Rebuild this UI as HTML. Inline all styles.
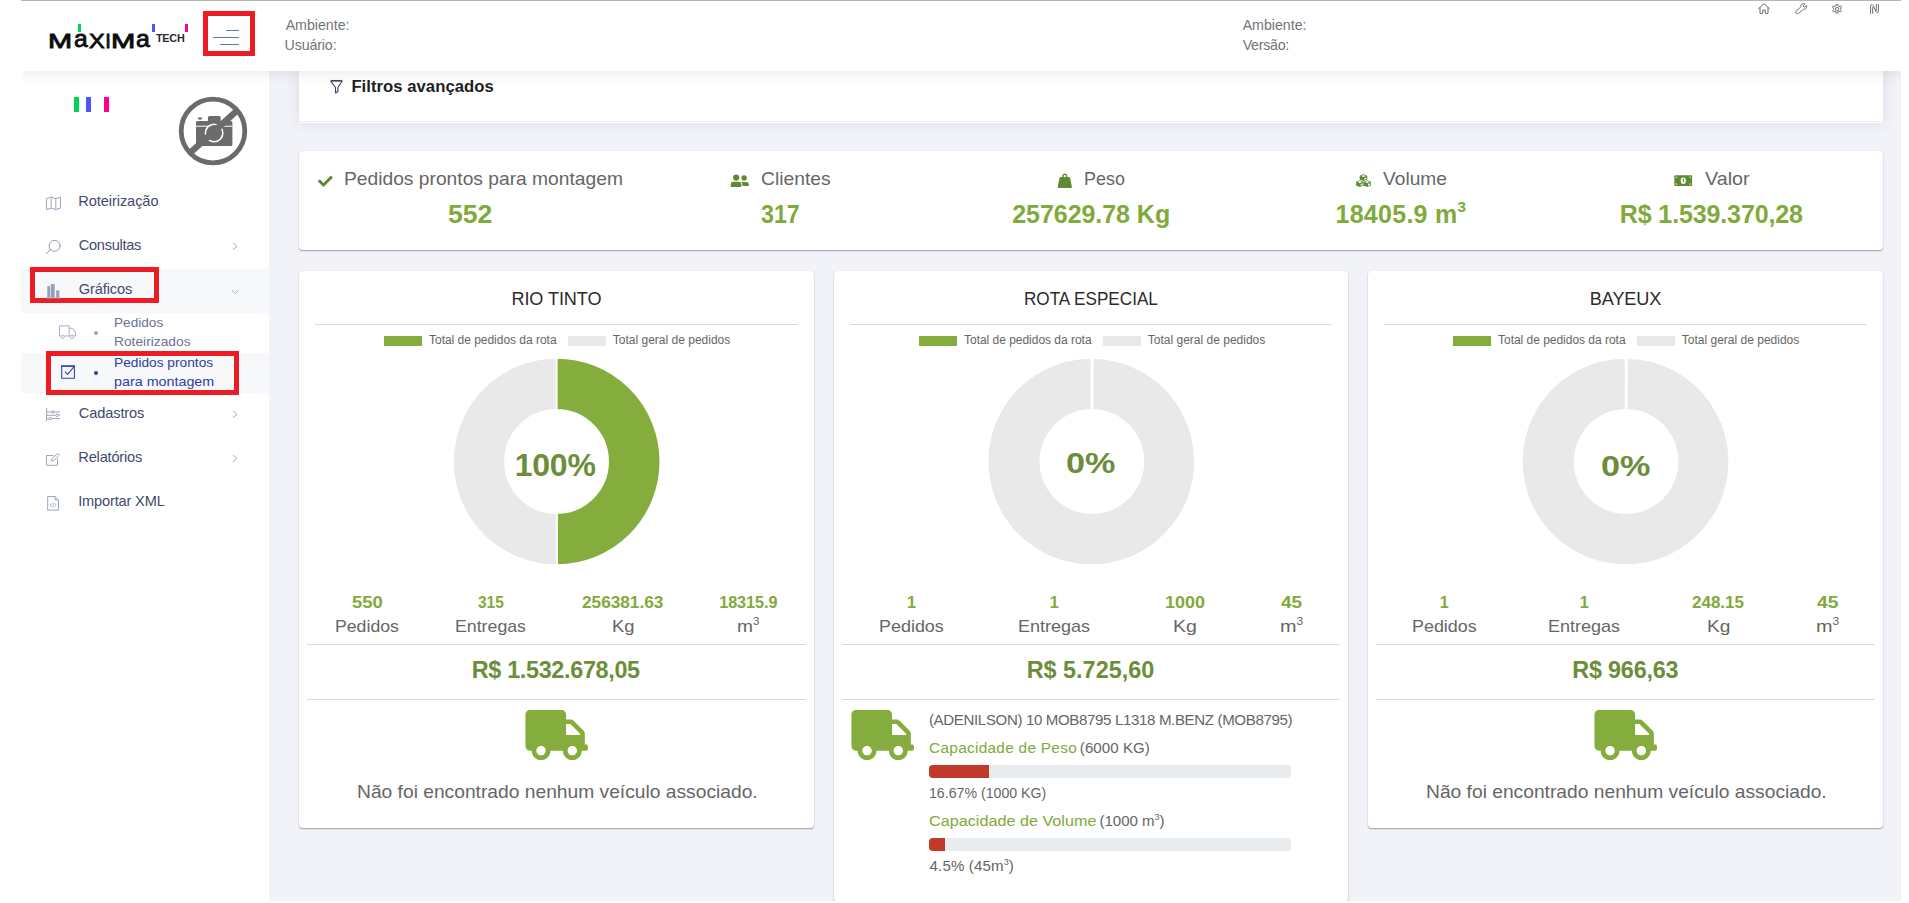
<!DOCTYPE html>
<html lang="pt-BR">
<head>
<meta charset="utf-8">
<title>Pedidos prontos para montagem</title>
<style>
html,body{margin:0;padding:0}
body{width:1909px;height:903px;position:relative;overflow:hidden;background:#fff;font-family:"Liberation Sans",sans-serif}
.t{position:absolute;white-space:pre;line-height:1;font-family:"Liberation Sans",sans-serif}
.abs{position:absolute}
#main{left:269px;top:1px;width:1632px;height:901px;background:#f2f3f8}
#sidebar{left:21px;top:71px;width:248px;height:831px;background:#fff}
#header{left:21px;top:0;width:1880px;height:71px;background:#fff;box-shadow:0 1px 13px rgba(60,60,80,.13)}
#topline{left:21px;top:0;width:1880px;height:1px;background:#b4b4b4}
.card{background:#fff;border-radius:4px;box-shadow:0 1px 1.5px rgba(0,0,0,.36)}
.hr{height:1px;background:#dcdcdc}
.redbox{border:5px solid #ed1c24;box-sizing:border-box}
.rowbg{background:#f7f8fa}
.bar{height:12px;border-radius:4px;background:#e9ecef;overflow:hidden}
.bar i{display:block;height:100%;background:#c0392b}
svg{position:absolute;overflow:visible}

sup{font-size:61%;line-height:0;position:relative;vertical-align:baseline;top:-0.70em;letter-spacing:0}

</style>
</head>
<body>
<div id="main" class="abs"></div>
<div id="filter" class="abs" style="left:299px;top:40px;width:1584px;height:83px;background:#fff;box-shadow:0 0 13px rgba(69,65,78,.13)"><div class="abs" style="left:0;top:81px;width:1584px;height:1px;background:#ebedf2"></div></div>
<div id="sidebar" class="abs"></div>
<div class="abs rowbg" style="left:21px;top:269px;width:248px;height:44px"></div>
<div class="abs rowbg" style="left:21px;top:353px;width:248px;height:40px"></div>
<div id="header" class="abs"></div>
<div id="topline" class="abs"></div>
<div class="abs redbox" style="left:203px;top:11px;width:52px;height:45px"></div>
<div class="abs redbox" style="left:30px;top:266.8px;width:129px;height:36.6px"></div>
<div class="abs redbox" style="left:46px;top:351.2px;width:192.8px;height:43.6px"></div>
<div class="abs card" style="left:299px;top:151px;width:1584px;height:99px"></div>
<div class="abs card" style="left:299px;top:271px;width:515px;height:557px"></div>
<div class="abs card" style="left:834px;top:271px;width:514px;height:630.5px"></div>
<div class="abs card" style="left:1368px;top:271px;width:515px;height:557px"></div>
<div class="abs hr" style="left:315px;top:324px;width:483px"></div>
<div class="abs hr" style="left:307px;top:644px;width:499px"></div>
<div class="abs hr" style="left:307px;top:699px;width:499px"></div>
<div class="abs hr" style="left:850px;top:324px;width:482px"></div>
<div class="abs hr" style="left:842px;top:644px;width:498px"></div>
<div class="abs hr" style="left:842px;top:699px;width:498px"></div>
<div class="abs hr" style="left:1384px;top:324px;width:483px"></div>
<div class="abs hr" style="left:1376px;top:644px;width:499px"></div>
<div class="abs hr" style="left:1376px;top:699px;width:499px"></div>
<div class="abs" style="left:383.8px;top:336px;width:38px;height:10px;background:#85ad3d"></div>
<div class="abs" style="left:567.8px;top:336px;width:38px;height:10px;background:#e9e9e9"></div>
<div class="abs" style="left:918.8px;top:336px;width:38px;height:10px;background:#85ad3d"></div>
<div class="abs" style="left:1102.8px;top:336px;width:38px;height:10px;background:#e9e9e9"></div>
<div class="abs" style="left:1452.8px;top:336px;width:38px;height:10px;background:#85ad3d"></div>
<div class="abs" style="left:1636.8px;top:336px;width:38px;height:10px;background:#e9e9e9"></div>
<svg class="abs" style="left:0;top:0" width="1909" height="903" viewBox="0 0 1909 903"><path d="M556.40 357.70A103.8 103.8 0 0 1 556.99 565.30L556.69 512.90A51.4 51.4 0 0 0 556.40 410.10Z" fill="#85ad3d" stroke="#fff" stroke-width="2" stroke-linejoin="round"/><path d="M556.99 565.30A103.8 103.8 0 1 1 556.40 357.70L556.40 410.10A51.4 51.4 0 1 0 556.69 512.90Z" fill="#e9e9e9" stroke="#fff" stroke-width="2" stroke-linejoin="round"/></svg>
<svg class="abs" style="left:0;top:0" width="1909" height="903" viewBox="0 0 1909 903"><path d="M1091.60 357.70A103.8 103.8 0 0 1 1092.78 357.71L1092.18 410.10A51.4 51.4 0 0 0 1091.60 410.10Z" fill="#85ad3d" stroke="#fff" stroke-width="2" stroke-linejoin="round"/><path d="M1092.78 357.71A103.8 103.8 0 1 1 1091.60 357.70L1091.60 410.10A51.4 51.4 0 1 0 1092.18 410.10Z" fill="#e9e9e9" stroke="#fff" stroke-width="2" stroke-linejoin="round"/></svg>
<svg class="abs" style="left:0;top:0" width="1909" height="903" viewBox="0 0 1909 903"><path d="M1625.80 357.70A103.8 103.8 0 0 1 1626.98 357.71L1626.38 410.10A51.4 51.4 0 0 0 1625.80 410.10Z" fill="#85ad3d" stroke="#fff" stroke-width="2" stroke-linejoin="round"/><path d="M1626.98 357.71A103.8 103.8 0 1 1 1625.80 357.70L1625.80 410.10A51.4 51.4 0 1 0 1626.38 410.10Z" fill="#e9e9e9" stroke="#fff" stroke-width="2" stroke-linejoin="round"/></svg>
<div class="abs bar" style="left:929.2px;top:765px;width:361.8px;height:12.6px"><i style="width:16.67%"></i></div>
<div class="abs bar" style="left:929.2px;top:838.4px;width:361.8px;height:12.4px"><i style="width:4.5%"></i></div>
<svg class="abs" style="left:524.6px;top:710.3px" width="63.4" height="50" viewBox="0 0 640 512"><path fill="#85ad3d" d="M624 352h-16V243.9c0-12.700-5.100-24.900-14.100-33.900L494 110.100c-9-9-21.200-14.100-33.900-14.100H416V48c0-26.500-21.500-48-48-48H48C21.500 0 0 21.500 0 48v320c0 26.500 21.500 48 48 48h16c0 53 43 96 96 96s96-43 96-96h128c0 53 43 96 96 96s96-43 96-96h48c8.800 0 16-7.200 16-16v-32c0-8.800-7.200-16-16-16zM160 464c-26.500 0-48-21.500-48-48s21.500-48 48-48 48 21.500 48 48-21.500 48-48 48zm320 0c-26.500 0-48-21.500-48-48s21.500-48 48-48 48 21.500 48 48-21.500 48-48 48zm80-208H416V144h44.100l99.900 99.900V256z"/></svg>
<svg class="abs" style="left:850.8px;top:710.3px" width="63.4" height="50" viewBox="0 0 640 512"><path fill="#85ad3d" d="M624 352h-16V243.9c0-12.700-5.100-24.900-14.100-33.900L494 110.100c-9-9-21.200-14.100-33.900-14.100H416V48c0-26.500-21.500-48-48-48H48C21.500 0 0 21.500 0 48v320c0 26.500 21.500 48 48 48h16c0 53 43 96 96 96s96-43 96-96h128c0 53 43 96 96 96s96-43 96-96h48c8.800 0 16-7.200 16-16v-32c0-8.800-7.200-16-16-16zM160 464c-26.500 0-48-21.500-48-48s21.500-48 48-48 48 21.500 48 48-21.500 48-48 48zm320 0c-26.500 0-48-21.500-48-48s21.500-48 48-48 48 21.500 48 48-21.500 48-48 48zm80-208H416V144h44.100l99.900 99.900V256z"/></svg>
<svg class="abs" style="left:1594.1px;top:710.3px" width="63.4" height="50" viewBox="0 0 640 512"><path fill="#85ad3d" d="M624 352h-16V243.9c0-12.700-5.100-24.900-14.100-33.900L494 110.100c-9-9-21.200-14.100-33.900-14.100H416V48c0-26.500-21.500-48-48-48H48C21.500 0 0 21.500 0 48v320c0 26.500 21.500 48 48 48h16c0 53 43 96 96 96s96-43 96-96h128c0 53 43 96 96 96s96-43 96-96h48c8.800 0 16-7.200 16-16v-32c0-8.800-7.200-16-16-16zM160 464c-26.500 0-48-21.500-48-48s21.500-48 48-48 48 21.500 48 48-21.500 48-48 48zm320 0c-26.500 0-48-21.500-48-48s21.500-48 48-48 48 21.500 48 48-21.500 48-48 48zm80-208H416V144h44.100l99.900 99.900V256z"/></svg><!-- logo -->
<div class="abs" style="left:78px;top:24px;width:3px;height:8px;background:#00d455"></div>
<div class="abs" style="left:151.6px;top:23.7px;width:3px;height:8.8px;background:#4d55ff"></div>
<div class="abs" style="left:185px;top:23.7px;width:3px;height:8.3px;background:#ff0090"></div>
<!-- hamburger -->
<div class="abs" style="left:226.4px;top:30px;width:12.8px;height:1px;background:#5d78a0"></div>
<div class="abs" style="left:213px;top:37px;width:26.2px;height:1px;background:#5d78a0"></div>
<div class="abs" style="left:220px;top:44px;width:19.2px;height:1px;background:#5d78a0"></div>
<!-- header right icons -->
<svg style="left:1757.5px;top:2.8px" width="12" height="11" viewBox="0 0 12 11" fill="none" stroke="#6f6f6f" stroke-width="1" stroke-linejoin="round" stroke-linecap="round"><path d="M0.6 5.6L6 0.7l5.400 4.900M2 4.600V10.400h2.800V7h2.400v3.400H10V4.600"/></svg>
<svg style="left:1794.5px;top:3.2px" width="12" height="11" viewBox="0 0 12 11" fill="none" stroke="#6f6f6f" stroke-width="1" stroke-linejoin="round" stroke-linecap="round"><path d="M1 10.300c-.6-.6-.6-1.300 0-1.900l4.900-4.600C5.600 2.400 6.300 1.200 7.600.7c.8-.3 1.700-.2 2.300.1L8.300 2.500l.3 1.300 1.300.3 1.600-1.600c.3.700.3 1.500 0 2.200-.6 1.200-1.800 1.800-3.100 1.600L3.600 10.300c-.6.600-1.300.6-1.900 0z"/></svg>
<svg style="left:1831.3px;top:4.1px" width="12" height="11" viewBox="0 0 12 11" fill="none" stroke="#6f6f6f" stroke-width="1" stroke-linejoin="round"><path d="M5.100.6h1.800l.3 1.400 1 .5 1.300-.7.900 1.300-.9 1.100v1.300l.9 1.100-.9 1.300-1.300-.7-1 .5-.3 1.400H5.100l-.3-1.400-1-.5-1.300.7-.9-1.300.9-1.100V4.200l-.9-1.100.9-1.300 1.300.7 1-.5z"/><circle cx="6" cy="5.200" r="1.700"/></svg>
<svg style="left:1870px;top:4.3px" width="9" height="10" viewBox="0 0 9 10" fill="none" stroke="#6f6f6f" stroke-width="1" stroke-linejoin="round" stroke-linecap="round"><path d="M.6 9.500V1.800C.6.300 2.400.1 3 1.300l3 6.400c.6 1.200 2.400 1 2.400-.5V.5M2.700 9.500V3.400M6.300.5v6"/></svg>
<!-- sidebar colour bars -->
<div class="abs" style="left:73.5px;top:96.5px;width:5.600px;height:15.400px;background:#00d455"></div>
<div class="abs" style="left:85.600px;top:96.500px;width:5.400px;height:15.400px;background:#4d55ff"></div>
<div class="abs" style="left:103.900px;top:96.500px;width:5.600px;height:15.400px;background:#ff0090"></div>
<!-- no-photo camera -->
<svg style="left:176px;top:94px" width="74" height="74" viewBox="176 94 74 74">
<circle cx="213" cy="131" r="31.800" fill="none" stroke="#6b6b6b" stroke-width="4.800"/>
<path fill="#6b6b6b" d="M196 122.500q0-1.500 1.500-1.500H208v-3.400q0-1.500 1.500-1.500h9.700q1.500 0 1.500 1.500V121h10.200q1.500 0 1.500 1.500v21.900q0 1.500-1.500 1.500H197.500q-1.500 0-1.500-1.500z"/>
<rect x="197.800" y="117.600" width="4.400" height="1.800" rx=".8" fill="#6b6b6b"/>
<rect x="196" y="125.700" width="36.400" height="1" fill="#fff"/>
<circle cx="214.100" cy="133" r="8.600" fill="none" stroke="#fff" stroke-width="1.800"/>
<circle cx="214.100" cy="133" r="7.700" fill="#6b6b6b"/>
<path d="M190.600 152.300L237.600 110.100" stroke="#6b6b6b" stroke-width="6.400" fill="none"/>
</svg>
<!-- sidebar icons -->
<svg style="left:45px;top:195px" width="17" height="16" viewBox="45 195 17 16" fill="none" stroke="#9da3c2" stroke-width="1" stroke-linejoin="round"><path d="M46.500 198.600l4.600-1.500 4.700 1.500 4.600-1.500v11l-4.600 1.500-4.700-1.500-4.600 1.500zM51.100 197.100v11M55.800 198.600v11"/></svg>
<svg style="left:45px;top:238px" width="17" height="17" viewBox="45 238 17 17" fill="none" stroke="#9297b8" stroke-width="1" stroke-linecap="round"><circle cx="54.600" cy="245.800" r="5.500"/><path d="M50.600 249.700L46.400 253.500"/></svg>
<svg style="left:45px;top:283px" width="17" height="16" viewBox="45 283 17 16"><rect x="47.300" y="286.300" width="2.800" height="11.200" fill="#9a9cb8"/><rect x="50.800" y="284.100" width="3.900" height="13.400" fill="#9a9cb8"/><rect x="56.200" y="290.300" width="3.100" height="7.200" fill="#9a9cb8"/><rect x="46" y="297.500" width="14.600" height="1" fill="#9a9cb8"/></svg>
<svg style="left:58px;top:324px" width="19" height="16" viewBox="58 324 19 16" fill="none" stroke="#a9aecb" stroke-width="1" stroke-linejoin="round"><path d="M59.500 325.800h9.700v10.200M59.500 325.800v10.200h1.400M64.400 336h5.800M69.200 328.300h3.400l2.800 3.700v4h-1.600"/><circle cx="62.600" cy="336.800" r="1.600"/><circle cx="71.900" cy="336.800" r="1.600"/></svg>

<svg style="left:60px;top:363px" width="17" height="17" viewBox="60 363 17 17" fill="none" stroke="#3545a8" stroke-width="1.100" stroke-linejoin="round" stroke-linecap="round"><path d="M61.700 366.200h12.700v12H61.700z"/><path d="M61.700 366h12.700" stroke-width="1.600"/><path d="M65.200 371.800l2.400 2.600 6-7.200"/></svg>
<svg style="left:45px;top:407px" width="17" height="16" viewBox="45 407 17 16" fill="none" stroke="#9da3c2" stroke-width="1"><path d="M46.600 408v13.500M46.600 412h13.400M46.600 415.300h13.400M46.600 418.600h13.400"/><circle cx="52.900" cy="412" r="1.300" fill="#fff"/><circle cx="57.200" cy="415.300" r="1.300" fill="#fff"/><circle cx="50.300" cy="418.600" r="1.300" fill="#fff"/></svg>
<svg style="left:45px;top:452px" width="17" height="16" viewBox="45 452 17 16" fill="none" stroke="#9da3c2" stroke-width="1" stroke-linejoin="round"><path d="M53.500 455.500h-7v9.800h11v-6.500"/><path d="M51.300 461l.7-2.300 5.800-5.300 1.700 1.700-5.900 5.300z"/></svg>
<svg style="left:46px;top:495px" width="15" height="17" viewBox="46 495 15 17" fill="none" stroke="#9da3c2" stroke-width="1" stroke-linejoin="round"><path d="M47.700 496.600h7.400l3.400 3.300v10.200H47.700zM55.100 496.600v3.300h3.400"/><path d="M51.400 503.300l-1.400 1.700 1.400 1.700M54.800 503.300l1.400 1.700-1.400 1.700M53.500 502.500l-.8 5" stroke-width=".8"/></svg>
<!-- bullets -->
<div class="abs" style="left:94.100px;top:331px;width:4px;height:4px;border-radius:50%;background:#a3a7c0"></div>
<div class="abs" style="left:93.900px;top:370.600px;width:4.400px;height:4.400px;border-radius:50%;background:#2e3e9b"></div>
<!-- chevrons -->
<svg style="left:232px;top:242px" width="7" height="9" viewBox="0 0 7 9" fill="none" stroke="#a6abc6" stroke-width="1"><path d="M1 1l4 3.400L1 7.800"/></svg>
<svg style="left:230px;top:288px" width="11" height="7" viewBox="0 0 11 7" fill="none" stroke="#a6abc6" stroke-width="1"><path d="M1.800 2.200l3.500 3.300 3.500-3.300"/></svg>
<svg style="left:232px;top:410px" width="7" height="9" viewBox="0 0 7 9" fill="none" stroke="#a6abc6" stroke-width="1"><path d="M1 1l4 3.400L1 7.800"/></svg>
<svg style="left:232px;top:454px" width="7" height="9" viewBox="0 0 7 9" fill="none" stroke="#a6abc6" stroke-width="1"><path d="M1 1l4 3.400L1 7.800"/></svg>
<!-- funnel -->
<svg style="left:329px;top:79px" width="16" height="16" viewBox="329 79 16 16" fill="none" stroke="#3f4254" stroke-linejoin="round"><path d="M330.600 80.800h11.800" stroke-width="1.700"/><path d="M330.900 81.300l4.600 6.200v5.400l2.400-1.400v-4l4.200-6.200" stroke-width="1.100"/></svg>
<!-- stat icons -->
<svg style="left:317.500px;top:173.600px" width="14.600" height="14.600" viewBox="0 0 512 512"><path fill="#5e8a2e" d="M173.898 439.404l-166.400-166.400c-9.997-9.997-9.997-26.206 0-36.204l36.203-36.204c9.997-9.998 26.207-9.998 36.204 0L192 312.690 432.095 72.596c9.997-9.997 26.207-9.997 36.204 0l36.203 36.204c9.997 9.997 9.997 26.206 0 36.204l-294.400 294.401c-9.998 9.997-26.207 9.997-36.204-.001z"/></svg>
<svg style="left:730px;top:174px" width="20" height="14" viewBox="730 174 20 14" fill="#5f8a33"><circle cx="736.200" cy="177.600" r="3.150"/><path d="M730.800 186.900v-2.600q0-2.500 2.500-2.500h5.500q2.500 0 2.500 2.500v2.600z"/><circle cx="744.100" cy="178" r="2.700"/><path d="M742.300 185.900v-1.700q0-1.300-.8-2.300h5q2.300 0 2.300 2.300v1.700z"/></svg>
<svg style="left:1057px;top:173px" width="16" height="16" viewBox="1057 173 16 16"><path fill="#5f8a33" fill-rule="evenodd" d="M1064.800 173.500a2.700 2.700 0 0 1 2.500 3.600h1.800q.7 0 .9.700l1.900 9q.2 1.100-.9 1.100h-12.400q-1.100 0-.9-1.100l1.900-9q.2-.7.900-.7h1.800a2.700 2.700 0 0 1 2.500-3.600zm0 1.500a1.150 1.150 0 1 0 0 2.300 1.150 1.150 0 0 0 0-2.300z"/></svg>
<svg style="left:1355px;top:173px" width="17" height="16" viewBox="1355 173 17 16">
<g fill="#5f8a33"><path d="M1363.500 174.300l3.800 1.500v3.700l-3.800 1.600-3.800-1.600v-3.700z"/><path d="M1359.800 180.200l3.700 1.500v3.800l-3.700 1.600-3.700-1.600v-3.800z"/><path d="M1367.200 180.200l3.700 1.500v3.800l-3.700 1.600-3.700-1.600v-3.800z"/></g>
<g fill="#fff"><path d="M1363.500 175.200l2.500.9-2.500 1-2.500-1z"/><path d="M1364.400 178.200l1.900-.8v1.700l-1.900.8z"/><path d="M1359.800 181.100l2.500.9-2.500 1-2.500-1z"/><path d="M1360.700 184.100l1.900-.8v1.700l-1.900.8z"/><path d="M1367.200 181.100l2.500.9-2.500 1-2.500-1z"/><path d="M1368.100 184.100l1.900-.8v1.700l-1.900.8z"/></g></svg>
<svg style="left:1674px;top:175px" width="19" height="11" viewBox="1674 175 19 11"><rect x="1674.300" y="175.300" width="17.800" height="10.600" rx=".9" fill="#5f8a33"/><ellipse cx="1683.300" cy="180.700" rx="2.600" ry="3.200" fill="#fff"/><path d="M1675.700 176.700h1.900l-1.900 1.600zM1690.700 176.700h-1.900l1.900 1.600zM1675.700 184.500h1.900l-1.900-1.600zM1690.700 184.500h-1.900l1.900-1.600z" fill="#fff"/><path d="M1682.700 179.400l.8-.5v3.400" stroke="#5f8a33" stroke-width=".9" fill="none"/></svg>
<div id="logo"><span class="t" style="left:48.03px;top:31.03px;font-size:20.13px;color:#0d0d10;-webkit-text-stroke:0.85px #0d0d10;transform-origin:0 0;transform:scaleX(1.439)">M</span><span class="t" style="left:73.76px;top:28.14px;font-size:23.55px;color:#0d0d10;-webkit-text-stroke:0.85px #0d0d10;transform-origin:0 0;transform:scaleX(1.048)">a</span><span class="t" style="left:88.78px;top:31.03px;font-size:20.13px;color:#0d0d10;-webkit-text-stroke:0.85px #0d0d10;transform-origin:0 0;transform:scaleX(1.169)">X</span><span class="t" style="left:105.15px;top:31.03px;font-size:20.13px;color:#0d0d10;-webkit-text-stroke:0.85px #0d0d10;transform-origin:0 0;transform:scaleX(1.000)">I</span><span class="t" style="left:111.22px;top:31.03px;font-size:20.13px;color:#0d0d10;-webkit-text-stroke:0.85px #0d0d10;transform-origin:0 0;transform:scaleX(1.447)">M</span><span class="t" style="left:135.75px;top:28.14px;font-size:23.55px;color:#0d0d10;-webkit-text-stroke:0.85px #0d0d10;transform-origin:0 0;transform:scaleX(1.056)">a</span></div>
<div class="abs" style="left:0;top:0;width:21px;height:903px;background:#fff"></div>
<div class="abs" style="left:1901px;top:0;width:8px;height:903px;background:#fff"></div>
<div class="abs" style="left:0;top:900.6px;width:1909px;height:3px;background:#fff"></div>

<div id="texts">
<span class="t " style="left:285.67px;top:17.98px;font-size:14.2px;color:#70757a;">Ambiente:</span>
<span class="t " style="left:284.60px;top:37.78px;font-size:14.2px;color:#70757a;letter-spacing:-0.122px;">Usuário:</span>
<span class="t " style="left:1242.67px;top:17.98px;font-size:14.2px;color:#70757a;">Ambiente:</span>
<span class="t " style="left:1242.64px;top:37.78px;font-size:14.2px;color:#70757a;letter-spacing:-0.244px;">Versão:</span>
<span class="t " style="left:78.30px;top:194.04px;font-size:14.6px;color:#434a6b;letter-spacing:-0.083px;">Roteirização</span>
<span class="t " style="left:78.76px;top:237.84px;font-size:14.6px;color:#434a6b;letter-spacing:-0.292px;">Consultas</span>
<span class="t " style="left:78.77px;top:281.64px;font-size:14.6px;color:#434a6b;letter-spacing:-0.126px;">Gráficos</span>
<span class="t " style="left:113.68px;top:315.90px;font-size:13.0px;color:#6c7293;transform-origin:0 0;transform:scaleX(1.0473);">Pedidos</span>
<span class="t " style="left:113.67px;top:334.80px;font-size:13.0px;color:#6c7293;transform-origin:0 0;transform:scaleX(1.0590);">Roteirizados</span>
<span class="t " style="left:113.67px;top:355.50px;font-size:13.0px;color:#2c3ea3;transform-origin:0 0;transform:scaleX(1.0550);">Pedidos prontos</span>
<span class="t " style="left:113.88px;top:374.80px;font-size:13.0px;color:#2c3ea3;transform-origin:0 0;transform:scaleX(1.1011);">para montagem</span>
<span class="t " style="left:78.76px;top:405.84px;font-size:14.6px;color:#434a6b;letter-spacing:-0.106px;">Cadastros</span>
<span class="t " style="left:78.30px;top:449.64px;font-size:14.6px;color:#434a6b;letter-spacing:-0.186px;">Relatórios</span>
<span class="t " style="left:78.15px;top:494.24px;font-size:14.6px;color:#434a6b;letter-spacing:-0.161px;">Importar XML</span>
<span class="t " style="left:351.38px;top:78.66px;font-size:16.7px;font-weight:700;color:#1e1e24;letter-spacing:0.031px;">Filtros avançados</span>
<span class="t " style="left:344.22px;top:170.65px;font-size:17.9px;color:#666666;transform-origin:0 0;transform:scaleX(1.0746);">Pedidos prontos para montagem</span>
<span class="t " style="left:448.18px;top:201.54px;font-size:25.0px;font-weight:700;color:#80aa3b;transform-origin:0 0;transform:scaleX(1.0639);">552</span>
<span class="t " style="left:761.02px;top:170.65px;font-size:17.9px;color:#666666;transform-origin:0 0;transform:scaleX(1.0763);">Clientes</span>
<span class="t " style="left:761.47px;top:201.54px;font-size:25.0px;font-weight:700;color:#80aa3b;transform-origin:0 0;transform:scaleX(0.9289);">317</span>
<span class="t " style="left:1083.93px;top:170.65px;font-size:17.9px;color:#666666;letter-spacing:0.046px;">Peso</span>
<span class="t " style="left:1012.23px;top:201.54px;font-size:25.0px;font-weight:700;color:#80aa3b;letter-spacing:-0.047px;">257629.78 Kg</span>
<span class="t " style="left:1382.92px;top:170.65px;font-size:17.9px;color:#666666;transform-origin:0 0;transform:scaleX(1.0712);">Volume</span>
<span class="t " style="left:1335.53px;top:201.54px;font-size:25.0px;font-weight:700;color:#80aa3b;letter-spacing:0.274px;">18405.9 m<sup>3</sup></span>
<span class="t " style="left:1704.91px;top:170.65px;font-size:17.9px;color:#666666;transform-origin:0 0;transform:scaleX(1.1008);">Valor</span>
<span class="t " style="left:1619.83px;top:201.54px;font-size:25.0px;font-weight:700;color:#80aa3b;letter-spacing:-0.125px;">R$ 1.539.370,28</span>
<span class="t " style="left:511.42px;top:290.48px;font-size:18.1px;color:#2b2b2b;letter-spacing:-0.085px;">RIO TINTO</span>
<span class="t " style="left:1024.09px;top:290.48px;font-size:18.1px;color:#2b2b2b;transform-origin:0 0;transform:scaleX(0.9464);">ROTA ESPECIAL</span>
<span class="t " style="left:1589.82px;top:290.48px;font-size:18.1px;color:#2b2b2b;letter-spacing:-0.103px;">BAYEUX</span>
<span class="t " style="left:429.03px;top:334.14px;font-size:12px;color:#666666;letter-spacing:-0.023px;">Total de pedidos da rota</span>
<span class="t " style="left:612.83px;top:334.14px;font-size:12px;color:#666666;">Total geral de pedidos</span>
<span class="t " style="left:964.03px;top:334.14px;font-size:12px;color:#666666;letter-spacing:-0.023px;">Total de pedidos da rota</span>
<span class="t " style="left:1147.83px;top:334.14px;font-size:12px;color:#666666;">Total geral de pedidos</span>
<span class="t " style="left:1498.03px;top:334.14px;font-size:12px;color:#666666;letter-spacing:-0.023px;">Total de pedidos da rota</span>
<span class="t " style="left:1681.83px;top:334.14px;font-size:12px;color:#666666;">Total geral de pedidos</span>
<span class="t " style="left:514.68px;top:449.21px;font-size:32px;font-weight:700;color:#6b8e3b;letter-spacing:-0.228px;">100%</span>
<span class="t " style="left:1066.35px;top:448.21px;font-size:30px;font-weight:700;color:#6b8e3b;transform-origin:0 0;transform:scaleX(1.1382);">0%</span>
<span class="t " style="left:1600.95px;top:450.50px;font-size:30px;font-weight:700;color:#6b8e3b;transform-origin:0 0;transform:scaleX(1.1382);">0%</span>
<span class="t " style="left:351.63px;top:593.99px;font-size:16.2px;font-weight:700;color:#80aa3b;transform-origin:0 0;transform:scaleX(1.1411);">550</span>
<span class="t " style="left:335.15px;top:619.05px;font-size:16.6px;color:#666666;transform-origin:0 0;transform:scaleX(1.0654);">Pedidos</span>
<span class="t " style="left:477.75px;top:593.99px;font-size:16.2px;font-weight:700;color:#80aa3b;transform-origin:0 0;transform:scaleX(0.9545);">315</span>
<span class="t " style="left:455.44px;top:619.05px;font-size:16.6px;color:#666666;transform-origin:0 0;transform:scaleX(1.0689);">Entregas</span>
<span class="t " style="left:582.30px;top:593.99px;font-size:16.2px;font-weight:700;color:#80aa3b;transform-origin:0 0;transform:scaleX(1.0626);">256381.63</span>
<span class="t " style="left:611.89px;top:619.05px;font-size:16.6px;color:#666666;transform-origin:0 0;transform:scaleX(1.1083);">Kg</span>
<span class="t " style="left:719.18px;top:593.99px;font-size:16.2px;font-weight:700;color:#80aa3b;letter-spacing:-0.049px;">18315.9</span>
<span class="t " style="left:737.23px;top:619.05px;font-size:16.6px;color:#666666;transform-origin:0 0;transform:scaleX(1.1546);">m<sup>3</sup></span>
<span class="t " style="left:906.91px;top:593.99px;font-size:16.2px;font-weight:700;color:#80aa3b;">1</span>
<span class="t " style="left:878.83px;top:619.05px;font-size:16.6px;color:#666666;transform-origin:0 0;transform:scaleX(1.0809);">Pedidos</span>
<span class="t " style="left:1049.66px;top:593.99px;font-size:16.2px;font-weight:700;color:#80aa3b;">1</span>
<span class="t " style="left:1018.32px;top:619.05px;font-size:16.6px;color:#666666;transform-origin:0 0;transform:scaleX(1.0859);">Entregas</span>
<span class="t " style="left:1165.07px;top:593.99px;font-size:16.2px;font-weight:700;color:#80aa3b;transform-origin:0 0;transform:scaleX(1.1069);">1000</span>
<span class="t " style="left:1173.10px;top:619.05px;font-size:16.6px;color:#666666;transform-origin:0 0;transform:scaleX(1.1755);">Kg</span>
<span class="t " style="left:1281.01px;top:593.99px;font-size:16.2px;font-weight:700;color:#80aa3b;transform-origin:0 0;transform:scaleX(1.1721);">45</span>
<span class="t " style="left:1279.98px;top:619.05px;font-size:16.6px;color:#666666;transform-origin:0 0;transform:scaleX(1.1937);">m<sup>3</sup></span>
<span class="t " style="left:1439.86px;top:593.99px;font-size:16.2px;font-weight:700;color:#80aa3b;">1</span>
<span class="t " style="left:1412.03px;top:619.05px;font-size:16.6px;color:#666666;transform-origin:0 0;transform:scaleX(1.0792);">Pedidos</span>
<span class="t " style="left:1579.71px;top:593.99px;font-size:16.2px;font-weight:700;color:#80aa3b;">1</span>
<span class="t " style="left:1548.42px;top:619.05px;font-size:16.6px;color:#666666;transform-origin:0 0;transform:scaleX(1.0859);">Entregas</span>
<span class="t " style="left:1692.31px;top:593.99px;font-size:16.2px;font-weight:700;color:#80aa3b;transform-origin:0 0;transform:scaleX(1.0494);">248.15</span>
<span class="t " style="left:1706.83px;top:619.05px;font-size:16.6px;color:#666666;transform-origin:0 0;transform:scaleX(1.1531);">Kg</span>
<span class="t " style="left:1816.91px;top:593.99px;font-size:16.2px;font-weight:700;color:#80aa3b;transform-origin:0 0;transform:scaleX(1.1894);">45</span>
<span class="t " style="left:1815.88px;top:619.05px;font-size:16.6px;color:#666666;transform-origin:0 0;transform:scaleX(1.1937);">m<sup>3</sup></span>
<span class="t " style="left:471.73px;top:658.99px;font-size:23.4px;font-weight:700;color:#6b8e3b;letter-spacing:-0.326px;">R$ 1.532.678,05</span>
<span class="t " style="left:1026.63px;top:658.99px;font-size:23.4px;font-weight:700;color:#6b8e3b;letter-spacing:0.017px;">R$ 5.725,60</span>
<span class="t " style="left:1572.23px;top:658.99px;font-size:23.4px;font-weight:700;color:#6b8e3b;letter-spacing:-0.193px;">R$ 966,63</span>
<span class="t " style="left:356.72px;top:783.65px;font-size:17.9px;color:#666666;transform-origin:0 0;transform:scaleX(1.0744);">Não foi encontrado nenhum veículo associado.</span>
<span class="t " style="left:1426.12px;top:783.65px;font-size:17.9px;color:#666666;transform-origin:0 0;transform:scaleX(1.0744);">Não foi encontrado nenhum veículo associado.</span>
<span class="t " style="left:928.96px;top:712.02px;font-size:15.1px;color:#666666;letter-spacing:-0.374px;">(ADENILSON) 10 MOB8795 L1318 M.BENZ (MOB8795)</span>
<span class="t " style="left:929.12px;top:739.56px;font-size:15.4px;color:#80aa3b;letter-spacing:0.278px;">Capacidade de Peso</span>
<span class="t " style="left:1079.86px;top:739.82px;font-size:15.1px;color:#666666;letter-spacing:0.042px;">(6000 KG)</span>
<span class="t " style="left:929.42px;top:784.92px;font-size:15.1px;color:#666666;transform-origin:0 0;transform:scaleX(0.9378);">16.67% (1000 KG)</span>
<span class="t " style="left:929.08px;top:812.76px;font-size:15.4px;color:#80aa3b;transform-origin:0 0;transform:scaleX(1.0521);">Capacidade de Volume</span>
<span class="t " style="left:1099.56px;top:813.02px;font-size:15.1px;color:#666666;letter-spacing:-0.070px;">(1000 m<sup>3</sup>)</span>
<span class="t " style="left:929.55px;top:858.12px;font-size:15.1px;color:#666666;letter-spacing:0.123px;">4.5% (45m<sup>3</sup>)</span>
<span class="t " style="left:155.88px;top:32.86px;font-size:10.8px;font-weight:700;color:#2a2a30;letter-spacing:-0.186px;">TECH</span>
</div>
</body>
</html>
